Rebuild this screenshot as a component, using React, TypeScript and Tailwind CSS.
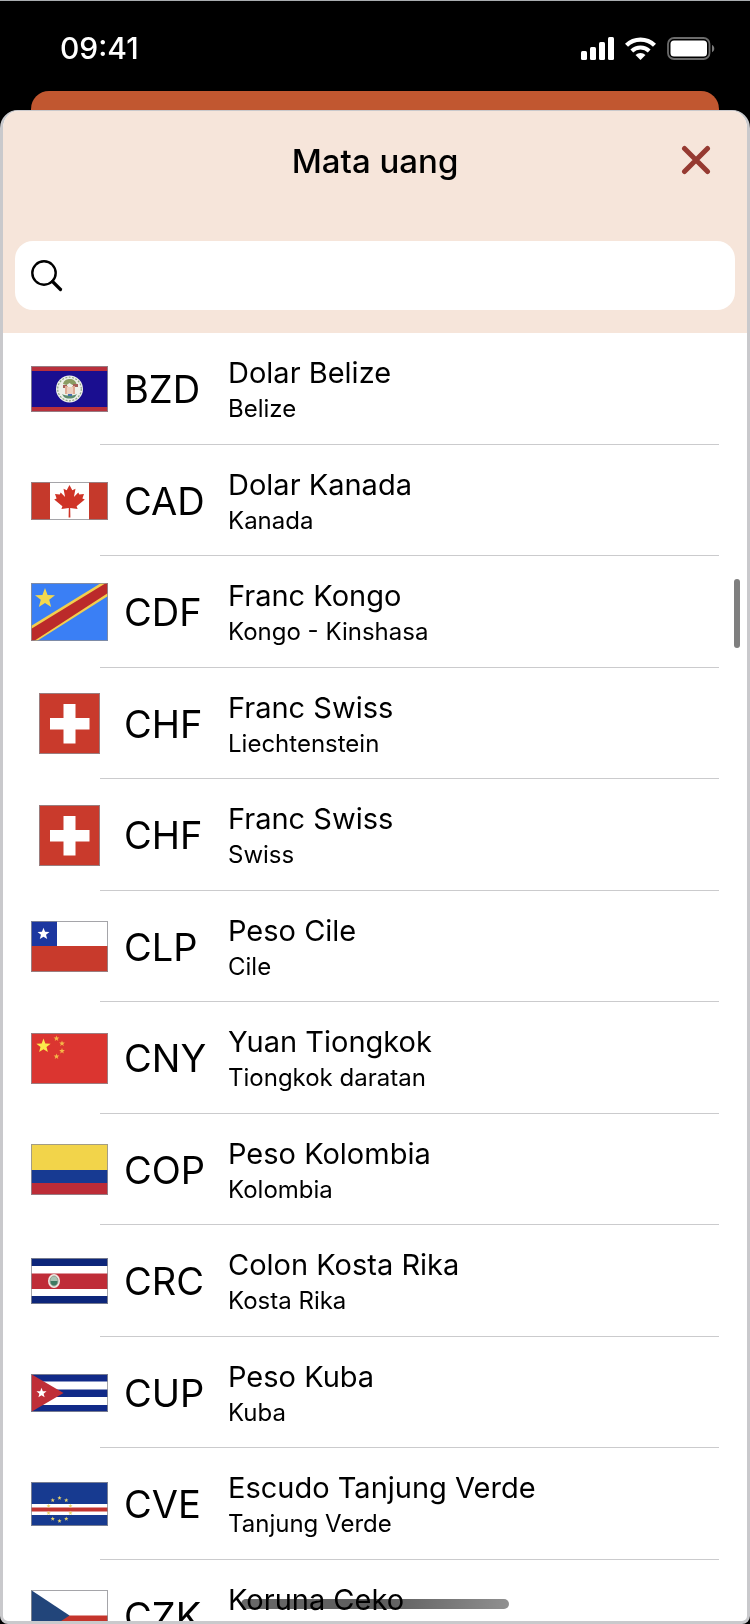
import React, { useState } from 'react';

interface Currency {
  code: string;
  name: string;
  country: string;
  flag: React.ReactNode;
}

interface FlagProps {
  width?: number;
  height: number;
  children: React.ReactNode;
}

const Flag: React.FC<FlagProps> = ({ width = 77, height, children }) => (
  <svg width={width} height={height} viewBox={`0 0 ${width} ${height}`} aria-hidden="true">
    {children}
    <rect x="0.5" y="0.5" width={width - 1} height={height - 1} fill="none" stroke="#8f8f94" strokeOpacity="0.8" />
  </svg>
);

interface StarProps {
  cx: number;
  cy: number;
  r: number;
  fill: string;
}

const Star: React.FC<StarProps> = ({ cx, cy, r, fill }) => {
  const points = Array.from({ length: 10 }, (_, i) => {
    const radius = i % 2 === 0 ? r : r * 0.42;
    const angle = (Math.PI / 5) * i - Math.PI / 2;
    return `${cx + radius * Math.cos(angle)},${cy + radius * Math.sin(angle)}`;
  }).join(' ');
  return <polygon points={points} fill={fill} />;
};

const BelizeFlag = () => (
  <Flag height={46}>
    <rect width="77" height="46" fill="#1a0e90" />
    <rect width="77" height="5" fill="#b8303c" />
    <rect y="41" width="77" height="5" fill="#b8303c" />
    <circle cx="38.5" cy="23" r="13.5" fill="#eef0ea" />
    <circle cx="38.5" cy="23" r="11.8" fill="none" stroke="#8fa886" strokeWidth="1.2" strokeDasharray="2 1.4" />
    <path d="M32 18c1-4 4-5 7-5s6 2 6.500 5l-4 1-3-2-3 2z" fill="#8a9c62" />
    <path d="M32 19h4v3h-4zM42 18h5v3h-5z" fill="#a5605a" />
    <path d="M34 20h3v8h-3zM41 20h3v8h-3z" fill="#e0ab95" />
    <path d="M36 21h6v7c-2 2-4 2-6 0z" fill="#ecd0c0" />
    <path d="M31 28c4 2 11 2 15 0l-2 3c-3 2-8 2-11 0z" fill="#5b8a6c" />
    <path d="M37 28h4v2h-4z" fill="#456fae" />
  </Flag>
);

const CanadaFlag = () => (
  <Flag height={38}>
    <rect width="77" height="38" fill="#fff" />
    <rect width="19" height="38" fill="#c5392b" />
    <rect x="58" width="19" height="38" fill="#c5392b" />
    <path
      d="M38.500 3l-2.800 5.200-3.200-1.500 1.600 8.200-4.400-4.300-1 2-4.700-.7 1.600 4.700-2.400 1 8.200 6.600-1 2.900 7.400-1-.2 9.400h1.800l-.2-9.400 7.400 1-1-2.900 8.200-6.600-2.400-1 1.600-4.700-4.700.7-1-2-4.400 4.300 1.600-8.200-3.200 1.500z"
      fill="#cf3326"
    />
  </Flag>
);

const CongoFlag = () => (
  <Flag height={58}>
    <rect width="77" height="58" fill="#3a7ff5" />
    <path d="M0 43L70 0h7v13L6 58H0z" fill="#f2cf4e" />
    <path d="M0 46L75 0h2v10L3 58H0z" fill="#bb2a2a" />
    <Star cx={14} cy={15.500} r={10.500} fill="#f3d84e" />
  </Flag>
);

const SwissFlag = () => (
  <Flag width={61} height={61}>
    <rect width="61" height="61" fill="#c93a2c" />
    <path d="M24.500 11h12v14h14v11.500h-14v14h-12v-14H11V25h13.500z" fill="#fff" />
  </Flag>
);

const ChileFlag = () => (
  <Flag height={51}>
    <rect width="77" height="51" fill="#fff" />
    <rect y="25" width="77" height="26" fill="#c83a2c" />
    <rect width="26" height="25" fill="#1c37a0" />
    <Star cx={12.500} cy={13} r={6.300} fill="#fff" />
  </Flag>
);

const ChinaFlag = () => (
  <Flag height={51}>
    <rect width="77" height="51" fill="#db3530" />
    <Star cx={12.500} cy={13} r={7.500} fill="#fbea4b" />
    <Star cx={25.500} cy={5.500} r={3} fill="#f5b848" />
    <Star cx={31} cy={10.500} r={3} fill="#f5b848" />
    <Star cx={31} cy={18} r={3} fill="#f5b848" />
    <Star cx={25.500} cy={23.500} r={3} fill="#f5b848" />
  </Flag>
);

const ColombiaFlag = () => (
  <Flag height={51}>
    <rect width="77" height="26" fill="#f2d44a" />
    <rect y="26" width="77" height="13" fill="#173a92" />
    <rect y="39" width="77" height="12" fill="#bd2c37" />
  </Flag>
);

const CostaRicaFlag = () => (
  <Flag height={46}>
    <rect width="77" height="46" fill="#0d267a" />
    <rect y="8" width="77" height="30" fill="#fff" />
    <rect y="15.500" width="77" height="15.500" fill="#bf2d38" />
    <ellipse cx="23" cy="23" rx="6" ry="7" fill="#efe9e4" />
    <ellipse cx="23" cy="23" rx="4" ry="5" fill="#a9c4b4" stroke="#8b8f80" strokeWidth="0.8" />
    <path d="M19.500 23h7c0 3-1.500 4.500-3.500 4.500s-3.500-1.500-3.500-4.500z" fill="#3f7a62" />
  </Flag>
);

const CubaFlag = () => (
  <Flag height={38}>
    <rect width="77" height="38" fill="#112a88" />
    <rect y="7.500" width="77" height="8" fill="#fff" />
    <rect y="23" width="77" height="8" fill="#fff" />
    <path d="M0 0l32.500 19L0 38z" fill="#bf2e37" />
    <Star cx={10.500} cy={19} r={5.300} fill="#fff" />
  </Flag>
);

const CapeVerdeFlag = () => (
  <Flag height={44}>
    <rect width="77" height="44" fill="#173a90" />
    <rect y="22" width="77" height="11" fill="#fff" />
    <rect y="25.500" width="77" height="4" fill="#c23431" />
    {Array.from({ length: 10 }, (_, i) => {
      const angle = (Math.PI / 5) * i - Math.PI / 2;
      return (
        <Star key={i} cx={28.500 + 11.500 * Math.cos(angle)} cy={27.500 + 11.500 * Math.sin(angle)} r={2.300} fill="#e9d36a" />
      );
    })}
  </Flag>
);

const CzechFlag = () => (
  <Flag height={51}>
    <rect width="77" height="51" fill="#fff" />
    <rect y="25.500" width="77" height="25.500" fill="#c5352c" />
    <path d="M0 0l38.500 25.500L0 51z" fill="#22457a" />
  </Flag>
);

const currencies: Currency[] = [
  { code: 'BZD', name: 'Dolar Belize', country: 'Belize', flag: <BelizeFlag /> },
  { code: 'CAD', name: 'Dolar Kanada', country: 'Kanada', flag: <CanadaFlag /> },
  { code: 'CDF', name: 'Franc Kongo', country: 'Kongo - Kinshasa', flag: <CongoFlag /> },
  { code: 'CHF', name: 'Franc Swiss', country: 'Liechtenstein', flag: <SwissFlag /> },
  { code: 'CHF', name: 'Franc Swiss', country: 'Swiss', flag: <SwissFlag /> },
  { code: 'CLP', name: 'Peso Cile', country: 'Cile', flag: <ChileFlag /> },
  { code: 'CNY', name: 'Yuan Tiongkok', country: 'Tiongkok daratan', flag: <ChinaFlag /> },
  { code: 'COP', name: 'Peso Kolombia', country: 'Kolombia', flag: <ColombiaFlag /> },
  { code: 'CRC', name: 'Colon Kosta Rika', country: 'Kosta Rika', flag: <CostaRicaFlag /> },
  { code: 'CUP', name: 'Peso Kuba', country: 'Kuba', flag: <CubaFlag /> },
  { code: 'CVE', name: 'Escudo Tanjung Verde', country: 'Tanjung Verde', flag: <CapeVerdeFlag /> },
  { code: 'CZK', name: 'Koruna Ceko', country: 'Ceko', flag: <CzechFlag /> }
];

const StatusBar = () => (
  <header className="flex h-[91px] shrink-0 items-center justify-between border-t border-[#a9adb0] pr-[35px] pl-[60px] pt-1 text-white">
    <time className="text-[30px] leading-8 font-medium">09:41</time>
    <div className="flex items-center gap-[11px]">
      {/* Signal */}
      <svg width="33" height="23" viewBox="0 0 33 23" fill="#fff" aria-hidden="true">
        <rect x="0" y="14" width="6" height="9" rx="1.500" />
        <rect x="9" y="10" width="6" height="13" rx="1.500" />
        <rect x="18" y="5" width="6" height="18" rx="1.500" />
        <rect x="27" y="0" width="6" height="23" rx="1.500" />
      </svg>
      {/* Wifi */}
      <svg width="31" height="23" viewBox="0 0 31 23" fill="none" stroke="#fff" aria-hidden="true">
        <path d="M1.500 8.300a20 20 0 0 1 28 0" strokeWidth="4.400" />
        <path d="M6.800 14a12.500 12.500 0 0 1 17.400 0" strokeWidth="4" />
        <path d="M10.500 18a7.300 7.300 0 0 1 10 0l-5 5z" fill="#fff" stroke="none" />
      </svg>
      {/* Battery */}
      <svg width="48" height="23" viewBox="0 0 48 23" fill="none" aria-hidden="true">
        <rect x="1" y="1" width="41.500" height="21" rx="6" stroke="#6b6b6b" strokeWidth="1.800" />
        <rect x="3.500" y="3.500" width="36.500" height="16" rx="3.500" fill="#fff" />
        <path d="M45 8c3 1.200 3 6 0 7.200z" fill="#7a7a7a" />
      </svg>
    </div>
  </header>
);

interface CurrencyRowProps {
  currency: Currency;
}

const CurrencyRow: React.FC<CurrencyRowProps> = ({ currency }) => (
  <li className="relative odd:h-[112px] even:h-[111px]">
    <button type="button" className="flex h-full w-full items-center pl-7 text-left">
      <span className="flex w-[77px] shrink-0 justify-center">{currency.flag}</span>
      <span className="ml-4 w-[104px] shrink-0 text-[38px] leading-[48px]">{currency.code}</span>
      <span className="flex flex-col">
        <span className="text-[29px] leading-10">{currency.name}</span>
        <span className="text-[24px] leading-8">{currency.country}</span>
      </span>
    </button>
    <span className="absolute right-7 bottom-0 left-[97px] h-px bg-[#cbcbcd]" />
  </li>
);

export default function App() {
  const [query, setQuery] = useState('');

  const visible = currencies.filter(currency =>
    `${currency.code} ${currency.name} ${currency.country}`.toLowerCase().includes(query.toLowerCase())
  );

  return (
    <div className="flex h-screen flex-col overflow-hidden bg-black font-['Inter','Liberation_Sans',sans-serif] text-black">
      <StatusBar />
      <div className="mx-[31px] h-[19px] shrink-0 rounded-t-[18px] bg-[#c15730]" />

      <main className="relative flex min-h-0 flex-1 flex-col overflow-hidden rounded-t-[18px] rounded-b-lg border-x-3 border-t border-b-3 border-[#c9c9cc] bg-white">
        <div className="flex shrink-0 flex-col bg-[#f6e5da] px-3 pb-[23px]">
          <div className="grid h-[130px] grid-cols-[1fr_auto_1fr] items-start pt-[30px]">
            <h1 className="col-start-2 text-[33px] leading-10 font-medium">Mata uang</h1>
            <button type="button" aria-label="Tutup" className="mt-1 mr-6 justify-self-end">
              <svg width="30" height="30" viewBox="0 0 30 30" fill="none" stroke="#963a31" strokeWidth="5" strokeLinecap="round">
                <path d="M3.500 3.500l23 23M26.500 3.500l-23 23" />
              </svg>
            </button>
          </div>
          <label className="flex h-[69px] items-center gap-4 rounded-[18px] bg-white px-4">
            <svg width="32" height="32" viewBox="0 0 32 32" fill="none" stroke="#000" strokeLinecap="round" aria-hidden="true">
              <circle cx="13" cy="13" r="11.700" strokeWidth="2.400" />
              <path d="M21.500 21.500l8 8" strokeWidth="3.200" />
            </svg>
            <input
              type="search"
              aria-label="Cari mata uang"
              value={query}
              onChange={e => setQuery(e.target.value)}
              className="min-w-0 flex-1 bg-transparent text-[29px] outline-none"
            />
          </label>
        </div>

        <ul className="min-h-0 flex-1 overflow-hidden">
          {visible.map(currency => (
            <CurrencyRow key={`${currency.code}-${currency.country}`} currency={currency} />
          ))}
        </ul>

        {/* Scroll thumb and home indicator float over the list */}
        <span className="absolute top-[468px] right-[7px] h-[69px] w-1.5 rounded-full bg-[#7f7f7f]" />
        <span className="absolute bottom-3 left-1/2 h-2.5 w-[268px] -translate-x-1/2 rounded-full bg-linear-to-r from-[#6a6a6a] via-[#5c5c5c] to-[#909090] mix-blend-multiply" />
      </main>
    </div>
  );
}
